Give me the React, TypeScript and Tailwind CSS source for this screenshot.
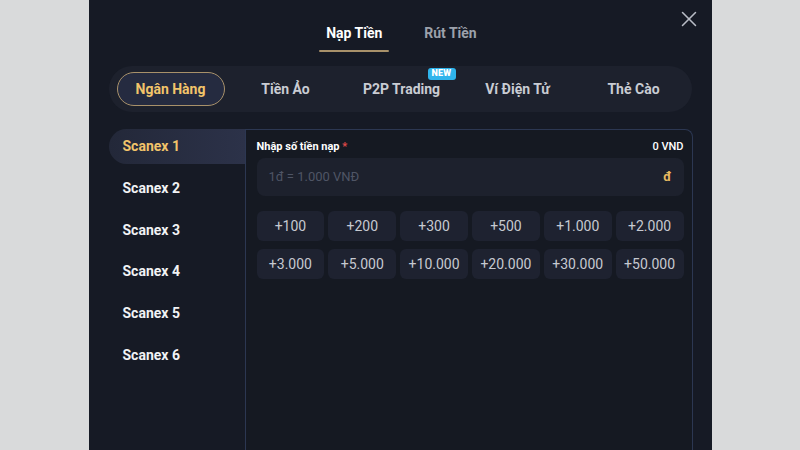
import { X } from "lucide-react";

const categories = ["Ngân Hàng", "Tiền Ảo", "P2P Trading", "Ví Điện Tử", "Thẻ Cào"];
const banks = ["Scanex 1", "Scanex 2", "Scanex 3", "Scanex 4", "Scanex 5", "Scanex 6"];
const amounts = [
  "+100",
  "+200",
  "+300",
  "+500",
  "+1.000",
  "+2.000",
  "+3.000",
  "+5.000",
  "+10.000",
  "+20.000",
  "+30.000",
  "+50.000",
];

export default function App() {
  return (
    <div className="w-[800px] h-[450px] bg-[#d9dadb] flex justify-center overflow-hidden font-['Roboto',sans-serif]">
      <div className="w-[623px] h-full bg-[#161a25] flex flex-col relative">
        {/* Close */}
        <button className="absolute right-[10px] top-[6px] text-[#b8bcc6]">
          <X className="w-[26px] h-[26px]" strokeWidth={1.4} />
        </button>

        {/* Top tabs */}
        <div className="flex justify-center gap-[35px] pt-[24px] h-[52px] pr-[4px]">
          <div className="flex flex-col items-center w-[70px]">
            <span className="text-[14px] font-bold text-white leading-[18px]">Nạp Tiền</span>
            <div className="mt-[8px] h-[2px] w-[70px] bg-[#a8916a] rounded-full" />
          </div>
          <span className="text-[14px] font-bold text-[#9ca1ab] leading-[18px]">Rút Tiền</span>
        </div>

        {/* Categories */}
        <div className="mx-[20px] mt-[14px] h-[46px] rounded-full bg-[#1d212d] flex items-center pl-[8px]">
          <div className="w-[108px] h-[34px] rounded-full border border-[#a8916a] bg-[#252b40] flex items-center justify-center text-[14px] font-bold text-[#f2c46a]">
            {categories[0]}
          </div>
          <div className="flex ml-[3px]">
            {categories.slice(1).map((c) => (
              <div
                key={c}
                className="relative w-[116px] h-[34px] flex items-center justify-center text-[14px] font-bold text-[#c9ccd3]"
              >
                {c}
                {c === "P2P Trading" && (
                  <span className="absolute top-[-4px] right-[4px] h-[12px] w-[28px] flex items-center justify-center bg-[#2fb4ec] text-white text-[9px] font-black rounded-[3px] tracking-wide">
                    NEW
                  </span>
                )}
              </div>
            ))}
          </div>
        </div>

        {/* Body */}
        <div className="flex flex-1 mt-[17px] pl-[20px] pr-[19px]">
          <div className="w-[136px] flex flex-col">
            {banks.map((b, i) => (
              <div
                key={b}
                className={
                  i === 0
                    ? "h-[35px] rounded-l-full bg-gradient-to-r from-[#232839] to-[#2c3249] flex items-center pl-[14px] text-[14px] font-bold text-[#f2c46a] mb-[6.8px]"
                    : "h-[35px] flex items-center pl-[14px] text-[14px] font-bold text-[#f1f2f4] mb-[6.8px]"
                }
              >
                {b}
              </div>
            ))}
          </div>

          <div className="flex-1 border border-b-0 border-[#2c3752] rounded-tr-[8px] bg-[#151922] pl-[11px] pr-[8px] pt-[10px]">
            <div className="flex justify-between items-center text-[11px] font-bold text-white h-[14px]">
              <span>
                Nhập số tiền nạp <span className="text-[#e04a4a]">*</span>
              </span>
              <span className="font-medium">0 VND</span>
            </div>
            <div className="mt-[4px] h-[38px] rounded-[8px] bg-[#1d212d] flex items-center justify-between px-[12px] text-[13px]">
              <span className="text-[#4f5565]">1đ = 1.000 VNĐ</span>
              <span className="text-[#e8b960] font-bold">đ</span>
            </div>
            <div className="mt-[15px] grid grid-cols-6 gap-x-[4px] gap-y-[8px]">
              {amounts.map((a) => (
                <div
                  key={a}
                  className="h-[30px] rounded-[6px] bg-[#1e2230] flex items-center justify-center text-[14px] text-[#c6c9d0]"
                >
                  {a}
                </div>
              ))}
            </div>
          </div>
        </div>
      </div>
    </div>
  );
}
